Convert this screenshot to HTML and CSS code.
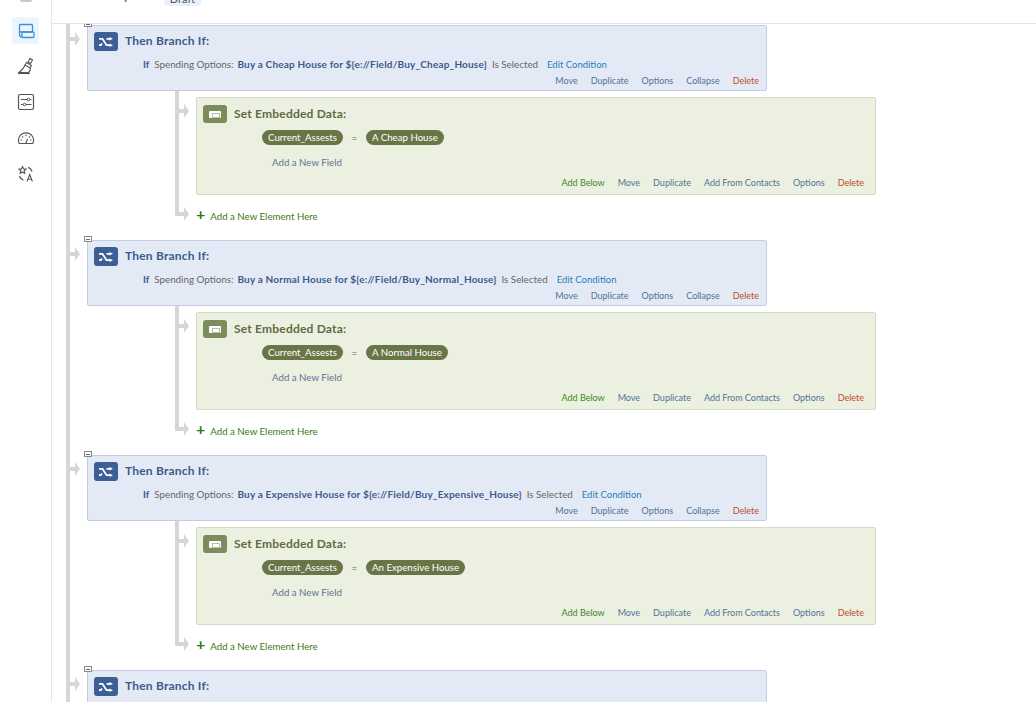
FILE: index.html
```html
<!DOCTYPE html>
<html lang="en">
<head>
<meta charset="utf-8">
<title>Survey Flow</title>
<link rel="stylesheet" href="styles.css">
</head>
<body>
<div class="app">
  <nav class="rail">
    <div class="rail-stub"></div>
    <div class="rail-item active">
      <svg width="20" height="20" viewBox="0 0 20 20" fill="none" stroke="#3d8fdc" stroke-width="1.300"><rect x="3.500" y="3.500" width="13" height="7.500" rx="1.200"/><path d="M3.500 10v3.500a2.500 2.500 0 0 0 2.500 2.500"/><rect x="6" y="11" width="12" height="5.500" rx="1"/></svg>
    </div>
    <div class="rail-item">
      <svg width="18" height="18" viewBox="0 0 18 18" fill="none" stroke="#555" stroke-width="1.100"><path d="M13 1.500l2.500 1.500-2 3.500-2.500-1.500z"/><path d="M9.500 5.500l5 3-1.500 2.500-5-3z"/><path d="M8 8c-1 3-3 5-6 7.500h9.500c1.500-1.500 2-3 2-4.500"/><path d="M1 16.500h12"/></svg>
    </div>
    <div class="rail-item">
      <svg width="18" height="18" viewBox="0 0 18 18" fill="none" stroke="#555"><rect x="1.500" y="1.500" width="15" height="15" rx="1.500" stroke-width="1.200"/><path d="M4 6.500h6M13 6.500h1.500M4 11.500h2M9 11.500h5.500" stroke-width="1"/><circle cx="11.500" cy="6.500" r="1.300"/><circle cx="7.500" cy="11.500" r="1.300"/></svg>
    </div>
    <div class="rail-item">
      <svg width="18" height="18" viewBox="0 0 18 18" fill="none" stroke="#555" stroke-width="1.100"><path d="M2.200 14.500a7.500 7.500 0 1 1 13.600 0z"/><path d="M9 5.500v1.500M5 7.500l1 1M13 7.500l-1 1M3.500 11h1.500M13 11h1.500M9 14l1.500-4"/></svg>
    </div>
    <div class="rail-item">
      <svg width="18" height="18" viewBox="0 0 18 18" fill="none" stroke="#555" stroke-width="1.100"><path d="M5.500 1.500l1.100 2.400 2.500.2-1.900 1.700.6 2.500-2.300-1.300-2.300 1.300.6-2.500L2 4.100l2.500-.2z"/><path d="M11 2.500c2 .5 3.500 2 4 4M2.500 11c.5 2 2 3.500 4 4"/><path d="M10 16.500l2.700-7 2.700 7M11 14.300h3.400"/></svg>
    </div>
  </nav>
  <div class="main">
    <header class="topbar">
      <span class="top-title">Survey</span>
      <span class="badge">Draft</span>
    </header>
    <div class="flow">
      <section class="group">
        <span class="toggle"></span>
        <div class="arrow"></div>
        <div class="branch">
          <div class="block-head"><span class="icon icon-branch"><svg width="14" height="10" viewBox="0 0 14 10" fill="none" stroke="#fff" stroke-width="1.800"><path d="M0 1.800h3.500l4 6.400H11M7.500 1.800H11M0 8.200h1.800l1.200-1.800"/><path d="M10.500 0L14 1.800 10.500 3.600zM10.500 6.400L14 8.200 10.500 10z" fill="#fff" stroke="none"/></svg></span><span class="block-title">Then Branch If:</span></div>
          <div class="cond"><b class="if">If</b><span class="muted">Spending Options:</span><b class="choice">Buy a Cheap House for ${e://Field/Buy_Cheap_House}</b><span class="muted">Is Selected</span><a class="edit">Edit Condition</a></div>
          <div class="actions"><a>Move</a><a>Duplicate</a><a>Options</a><a>Collapse</a><a class="del">Delete</a></div>
        </div>
        <div class="nested">
          <div class="arrow"></div>
          <div class="embedded">
            <div class="block-head"><span class="icon icon-ed"><span class="ed-glyph"></span></span><span class="block-title ed-title">Set Embedded Data:</span></div>
            <div class="field"><span class="pill">Current_Assests</span><span class="eq">=</span><span class="pill">A Cheap House</span></div>
            <a class="add-field">Add a New Field</a>
            <div class="actions"><a class="add">Add Below</a><a>Move</a><a>Duplicate</a><a>Add From Contacts</a><a>Options</a><a class="del">Delete</a></div>
          </div>
          <div class="arrow arrow-end"></div>
          <div class="add-el"><span class="plus">+</span><a>Add a New Element Here</a></div>
        </div>
      </section>
      <section class="group">
        <span class="toggle"></span>
        <div class="arrow"></div>
        <div class="branch">
          <div class="block-head"><span class="icon icon-branch"><svg width="14" height="10" viewBox="0 0 14 10" fill="none" stroke="#fff" stroke-width="1.800"><path d="M0 1.800h3.500l4 6.400H11M7.500 1.800H11M0 8.200h1.800l1.200-1.800"/><path d="M10.500 0L14 1.800 10.500 3.600zM10.500 6.400L14 8.200 10.500 10z" fill="#fff" stroke="none"/></svg></span><span class="block-title">Then Branch If:</span></div>
          <div class="cond"><b class="if">If</b><span class="muted">Spending Options:</span><b class="choice">Buy a Normal House for ${e://Field/Buy_Normal_House}</b><span class="muted">Is Selected</span><a class="edit">Edit Condition</a></div>
          <div class="actions"><a>Move</a><a>Duplicate</a><a>Options</a><a>Collapse</a><a class="del">Delete</a></div>
        </div>
        <div class="nested">
          <div class="arrow"></div>
          <div class="embedded">
            <div class="block-head"><span class="icon icon-ed"><span class="ed-glyph"></span></span><span class="block-title ed-title">Set Embedded Data:</span></div>
            <div class="field"><span class="pill">Current_Assests</span><span class="eq">=</span><span class="pill">A Normal House</span></div>
            <a class="add-field">Add a New Field</a>
            <div class="actions"><a class="add">Add Below</a><a>Move</a><a>Duplicate</a><a>Add From Contacts</a><a>Options</a><a class="del">Delete</a></div>
          </div>
          <div class="arrow arrow-end"></div>
          <div class="add-el"><span class="plus">+</span><a>Add a New Element Here</a></div>
        </div>
      </section>
      <section class="group">
        <span class="toggle"></span>
        <div class="arrow"></div>
        <div class="branch">
          <div class="block-head"><span class="icon icon-branch"><svg width="14" height="10" viewBox="0 0 14 10" fill="none" stroke="#fff" stroke-width="1.800"><path d="M0 1.800h3.500l4 6.400H11M7.500 1.800H11M0 8.200h1.800l1.200-1.800"/><path d="M10.500 0L14 1.800 10.500 3.600zM10.500 6.400L14 8.200 10.500 10z" fill="#fff" stroke="none"/></svg></span><span class="block-title">Then Branch If:</span></div>
          <div class="cond"><b class="if">If</b><span class="muted">Spending Options:</span><b class="choice">Buy a Expensive House for ${e://Field/Buy_Expensive_House}</b><span class="muted">Is Selected</span><a class="edit">Edit Condition</a></div>
          <div class="actions"><a>Move</a><a>Duplicate</a><a>Options</a><a>Collapse</a><a class="del">Delete</a></div>
        </div>
        <div class="nested">
          <div class="arrow"></div>
          <div class="embedded">
            <div class="block-head"><span class="icon icon-ed"><span class="ed-glyph"></span></span><span class="block-title ed-title">Set Embedded Data:</span></div>
            <div class="field"><span class="pill">Current_Assests</span><span class="eq">=</span><span class="pill">An Expensive House</span></div>
            <a class="add-field">Add a New Field</a>
            <div class="actions"><a class="add">Add Below</a><a>Move</a><a>Duplicate</a><a>Add From Contacts</a><a>Options</a><a class="del">Delete</a></div>
          </div>
          <div class="arrow arrow-end"></div>
          <div class="add-el"><span class="plus">+</span><a>Add a New Element Here</a></div>
        </div>
      </section>
      <section class="group">
        <span class="toggle"></span>
        <div class="arrow"></div>
        <div class="branch">
          <div class="block-head"><span class="icon icon-branch"><svg width="14" height="10" viewBox="0 0 14 10" fill="none" stroke="#fff" stroke-width="1.800"><path d="M0 1.800h3.500l4 6.400H11M7.500 1.800H11M0 8.200h1.800l1.200-1.800"/><path d="M10.500 0L14 1.800 10.500 3.600zM10.500 6.400L14 8.200 10.500 10z" fill="#fff" stroke="none"/></svg></span><span class="block-title">Then Branch If:</span></div>
        </div>
      </section>
    </div>
  </div>
</div>
</body>
</html>
```

FILE: styles.css
```css
* { box-sizing: border-box; }
html, body { margin: 0; height: 100%; overflow: hidden; background: #fff; }
body { font-family: Lato, "Open Sans", sans-serif; font-size: 10px; color: #555; }
a { display: inline-block; }

.app { display: flex; height: 702px; }

.rail {
  width: 52px;
  flex: none;
  border-right: 1px solid #e8e8e8;
  display: flex;
  flex-direction: column;
  align-items: center;
  gap: 9px;
}
.rail-stub { width: 12px; height: 8px; margin: -6px 0 6px; border-bottom: 3px solid #c8c8c8; border-radius: 0 0 2px 2px; }
.rail-item { width: 27px; height: 27px; display: flex; align-items: center; justify-content: center; border-radius: 4px; }
.rail-item svg { margin-bottom: 2px; }
.rail-item.active svg { margin-bottom: 0; }
.rail-item.active { background: #edf5fc; }

.main { flex: 1; min-width: 0; display: flex; flex-direction: column; }

.topbar {
  height: 24px;
  flex: none;
  border-bottom: 1px solid #e4e4e4;
  overflow: hidden;
  padding-left: 39px;
  display: flex;
  align-items: flex-start;
  gap: 24px;
}
.top-title { font-size: 13px; line-height: 14px; margin-top: -12px; color: #444; }
.badge { background: #e9f1fa; color: #556; border-radius: 4px; font-size: 11px; line-height: 15px; height: 15px; padding: 0 6px; margin: -9px 0 0 10px; }

.flow {
  flex: 1;
  min-height: 0;
  overflow: hidden;
  margin-left: 14px;
  border-left: 4px solid #d6d6d6;
  padding-left: 17px;
}

.group { position: relative; height: 215px; padding-top: 1px; }
.toggle {
  position: absolute;
  left: -3px;
  top: -3px;
  width: 8px;
  height: 6px;
  border: 1px solid #888;
  background: #fff linear-gradient(#666, #666) center/4px 1px no-repeat;
}
.group > .arrow { position: absolute; left: -18px; top: 8px; }

.arrow {
  width: 11px;
  height: 14px;
  background: #d6d6d6;
  clip-path: polygon(0 5px, 6px 5px, 6px 0, 11px 7px, 6px 14px, 6px 9px, 0 9px);
}

.branch {
  width: 680px;
  height: 66px;
  background: #e4eaf5;
  border: 1px solid #c3cce0;
  border-radius: 2px;
  padding: 6px 7px 0 6px;
}
.block-head { display: flex; align-items: center; gap: 7px; height: 19px; }
.icon { width: 24px; height: 19px; border-radius: 3px; display: flex; align-items: center; justify-content: center; flex: none; }
.icon-branch { background: #3c5f95; }
.icon-ed { background: #7d8c5c; height: 18px; }
.ed-glyph { width: 12px; height: 7px; background: #fff; border-radius: 1px; display: block; padding: 2px 3px; }
.ed-glyph::after { content: ""; display: block; width: 6px; height: 3px; border: 1px solid #b8bfa6; }
.block-title { font-size: 12px; letter-spacing: .2px; font-weight: 700; color: #3c5a8c; position: relative; top: -1px; }
.ed-title { color: #5f6b42; }

.cond { display: flex; align-items: baseline; margin: 6px 0 0 49px; line-height: 14px; height: 14px; font-size: 9.800px; white-space: nowrap; }
.if { color: #3c5a8c; margin-right: 5px; }
.muted { color: #666; margin-right: 4px; }
.cond .muted:last-of-type { margin-left: 5px; margin-right: 9px; }
.choice { color: #3c5a8c; font-size: 10px; letter-spacing: .18px; }
.edit { color: #1f7fb5; font-size: 9.500px; }

.actions { display: flex; justify-content: flex-end; gap: 13px; line-height: 12px; font-size: 9px; color: #4f7396; white-space: nowrap; }
.branch .actions { margin-top: 3.500px; }
.del { color: #c24a2a; }
.add { color: #3c8a1e; }

.nested {
  position: relative;
  margin-left: 88px;
  height: 125px;
  width: 701px;
  border-left: 4px solid #d6d6d6;
  padding: 6px 0 0 17px;
}
.nested > .arrow { position: absolute; left: -1px; top: 13px; }
.nested > .arrow-end { top: auto; bottom: -5px; }

.embedded {
  width: 680px;
  height: 98px;
  background: #ecf0e1;
  border: 1px solid #d5dac6;
  border-radius: 2px;
  padding: 7px 11px 0 6px;
}
.embedded .block-head { height: 18px; }
.field { display: flex; align-items: center; margin: 7px 0 0 59px; height: 15px; }
.pill { background: #6a7547; color: #fff; border-radius: 8px; height: 15px; line-height: 15px; padding: 0 6px; font-size: 9.700px; white-space: nowrap; }
.eq { width: 23px; text-align: center; color: #666; }
.add-field { display: block; margin: 11px 0 0 69px; line-height: 12px; font-size: 9.700px; color: #5e7391; }
.embedded .actions { margin-top: 9px; }

.add-el { position: absolute; left: 17px; bottom: -7px; height: 14px; display: flex; align-items: center; color: #3c7a14; font-size: 9.700px; white-space: nowrap; }
.plus { font-size: 16px; line-height: 14px; font-weight: 700; color: #2d7a12; margin-right: 5px; position: relative; top: -2px; }
```
